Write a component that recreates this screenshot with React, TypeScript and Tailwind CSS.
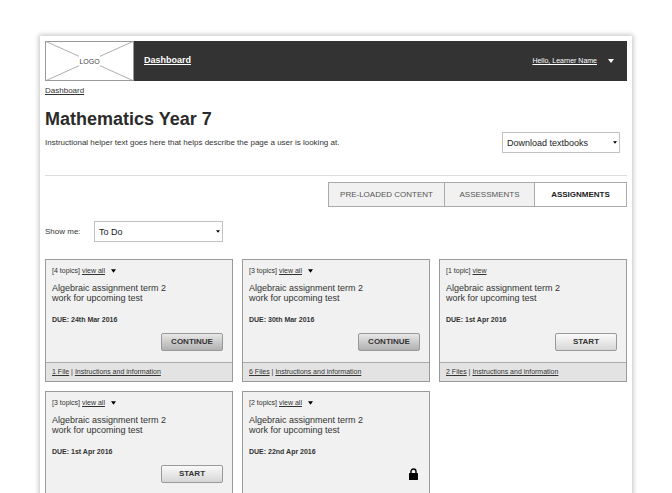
import { useState } from "react";
import { clsx } from "clsx";

type Assignment = {
  id: number;
  topics: number;
  due: string;
  files?: number;
  status: "continue" | "start" | "locked";
};

const assignments: Assignment[] = [
  { id: 1, topics: 4, due: "24th Mar 2016", files: 1, status: "continue" },
  { id: 2, topics: 3, due: "30th Mar 2016", files: 6, status: "continue" },
  { id: 3, topics: 1, due: "1st Apr 2016", files: 2, status: "start" },
  { id: 4, topics: 3, due: "1st Apr 2016", status: "start" },
  { id: 5, topics: 2, due: "22nd Apr 2016", status: "locked" }
];

const tabs = [
  { label: "PRE-LOADED CONTENT", width: "w-[116px]" },
  { label: "ASSESSMENTS", width: "w-[90px]" },
  { label: "ASSIGNMENTS", width: "w-[91px]" }
];

function Caret({ className }: { className?: string }) {
  return (
    <svg viewBox="0 0 6 4" className={className} aria-hidden="true">
      <path d="M0 0h6L3 4z" fill="currentColor" />
    </svg>
  );
}

function LockIcon() {
  return (
    <svg viewBox="0 0 9 12" className="h-3 w-[9px]" aria-hidden="true">
      <path d="M2 6V3.5a2.5 2.5 0 0 1 5 0V6" fill="none" stroke="#000" strokeWidth="1.4" />
      <rect y="5" width="9" height="7" rx="0.6" fill="#000" />
    </svg>
  );
}

function SelectBox({
  id,
  label,
  options,
  className
}: {
  id: string;
  label?: string;
  options: string[];
  className: string;
}) {
  return (
    <div className={clsx("relative", className)}>
      <select
        id={id}
        aria-label={label}
        className="block h-[21px] w-full appearance-none border border-[#c2c2c2] bg-white pr-4 pl-1 text-[9px] leading-5 text-[#222]"
      >
        {options.map((option) => (
          <option key={option}>{option}</option>
        ))}
      </select>
      <Caret className="pointer-events-none absolute top-[9px] right-[3px] h-[3px] w-1 text-black" />
    </div>
  );
}

function AssignmentCard({ assignment }: { assignment: Assignment }) {
  const { topics, due, files, status } = assignment;
  const single = topics === 1;

  return (
    <article className="min-h-[123px] border border-[#9a9a9a] bg-[#f1f1f1]">
      <div className="px-1.5 pt-[7px] pb-[11px]">
        <p className="flex items-center text-[7px] leading-2">
          <span>
            [{topics} {single ? "topic" : "topics"}]{" "}
            <a href="#topics" className="underline">
              {single ? "view" : "view all"}
            </a>
          </span>
          {single ? null : <Caret className="ml-1.5 h-1 w-[5px] text-black" />}
        </p>
        <h2 className="mt-2 text-[9px] leading-[10px]">
          Algebraic assignment term 2
          <br />
          work for upcoming test
        </h2>
        <p className="mt-3 text-[7px] leading-[10px] font-bold">DUE: {due}</p>
        <div className="mt-2 flex h-[18px] items-center justify-end pr-[3px]">
          {status === "locked" ? (
            <span role="img" aria-label="Locked" className="mr-0.5">
              <LockIcon />
            </span>
          ) : (
            <button
              type="button"
              className={clsx(
                "h-[18px] w-[62px] rounded-[2px] border border-[#999] bg-linear-to-b text-[8px] leading-4 font-bold text-[#333]",
                status === "continue"
                  ? "from-[#e8e8e8] to-[#b0b0b0]"
                  : "from-[#fafafa] to-[#d6d6d6]"
              )}
            >
              {status === "continue" ? "CONTINUE" : "START"}
            </button>
          )}
        </div>
      </div>
      {files ? (
        <footer className="border-t border-[#aaa] bg-[#e3e3e3] px-1.5 py-1 text-[7px] leading-[10px]">
          <a href="#files" className="underline">
            {files} {files === 1 ? "File" : "Files"}
          </a>{" "}
          |{" "}
          <a href="#instructions" className="underline">
            Instructions and information
          </a>
        </footer>
      ) : null}
    </article>
  );
}

export default function App() {
  const [activeTab, setActiveTab] = useState("ASSIGNMENTS");

  return (
    <div className="min-h-screen bg-white px-10 pt-9 font-['Liberation_Sans',Arial,sans-serif] text-[#333]">
      <div className="bg-white p-[5px] shadow-[0_0_5px_1px_rgba(0,0,0,0.25)]">
        <header className="flex h-10 items-center bg-[#333] text-white">
          <a href="#home" aria-label="Logo" className="h-10 w-[89px] text-[#444]">
            <svg viewBox="0 0 89 40" className="h-full w-full">
              <rect x="0.5" y="0.5" width="88" height="39" fill="#fff" stroke="#999" />
              <path d="M0 0l89 40M89 0L0 40" stroke="#999" strokeWidth="0.8" />
              <rect x="34" y="14" width="21" height="12" fill="#fff" />
              <text x="44.5" y="23" textAnchor="middle" fontSize="7" fill="currentColor">
                LOGO
              </text>
            </svg>
          </a>
          <nav className="ml-2.5 flex-1 text-[9px] font-bold">
            <a href="#dashboard" className="underline">
              Dashboard
            </a>
          </nav>
          <button type="button" className="mr-[13px] flex items-center gap-[11px] text-[7px]">
            <span className="underline">Hello, Learner Name</span>
            <Caret className="h-1 w-1.5" />
          </button>
        </header>

        <nav aria-label="Breadcrumb" className="mt-[5px] flex text-[8px] leading-[10px]">
          <a href="#dashboard" className="underline">
            Dashboard
          </a>
        </nav>

        <div className="mt-3 flex items-end justify-between border-b border-[#ddd] pb-[22px]">
          <div className="pb-[5px]">
            <h1 className="text-[18px] leading-[22px] font-bold text-[#2b2b2b]">
              Mathematics Year 7
            </h1>
            <p className="mt-2 text-[8px] leading-[10px]">
              Instructional helper text goes here that helps describe the page a user is looking
              at.
            </p>
          </div>
          <SelectBox
            id="textbooks"
            label="Download textbooks"
            options={["Download textbooks"]}
            className="mr-[7px] w-[118px]"
          />
        </div>

        <div className="mt-1.5 flex justify-end">
          <div
            role="tablist"
            className="flex divide-x divide-[#aaa] border border-[#aaa] text-[8px] leading-[23px]"
          >
            {tabs.map((tab) => (
              <button
                key={tab.label}
                type="button"
                role="tab"
                aria-selected={activeTab === tab.label}
                onClick={() => setActiveTab(tab.label)}
                className={clsx(
                  tab.width,
                  activeTab === tab.label
                    ? "bg-white font-bold text-[#222]"
                    : "bg-[#f1f1f1] text-[#555]"
                )}
              >
                {tab.label}
              </button>
            ))}
          </div>
        </div>

        <div className="mt-3.5 flex items-center">
          <label htmlFor="show" className="w-[49px] text-[8px]">
            Show me:
          </label>
          <SelectBox id="show" options={["To Do", "Completed"]} className="w-[129px]" />
        </div>

        <main className="mt-[17px] grid grid-cols-3 gap-[9px]">
          {assignments.map((assignment) => (
            <AssignmentCard key={assignment.id} assignment={assignment} />
          ))}
        </main>
      </div>
    </div>
  );
}
